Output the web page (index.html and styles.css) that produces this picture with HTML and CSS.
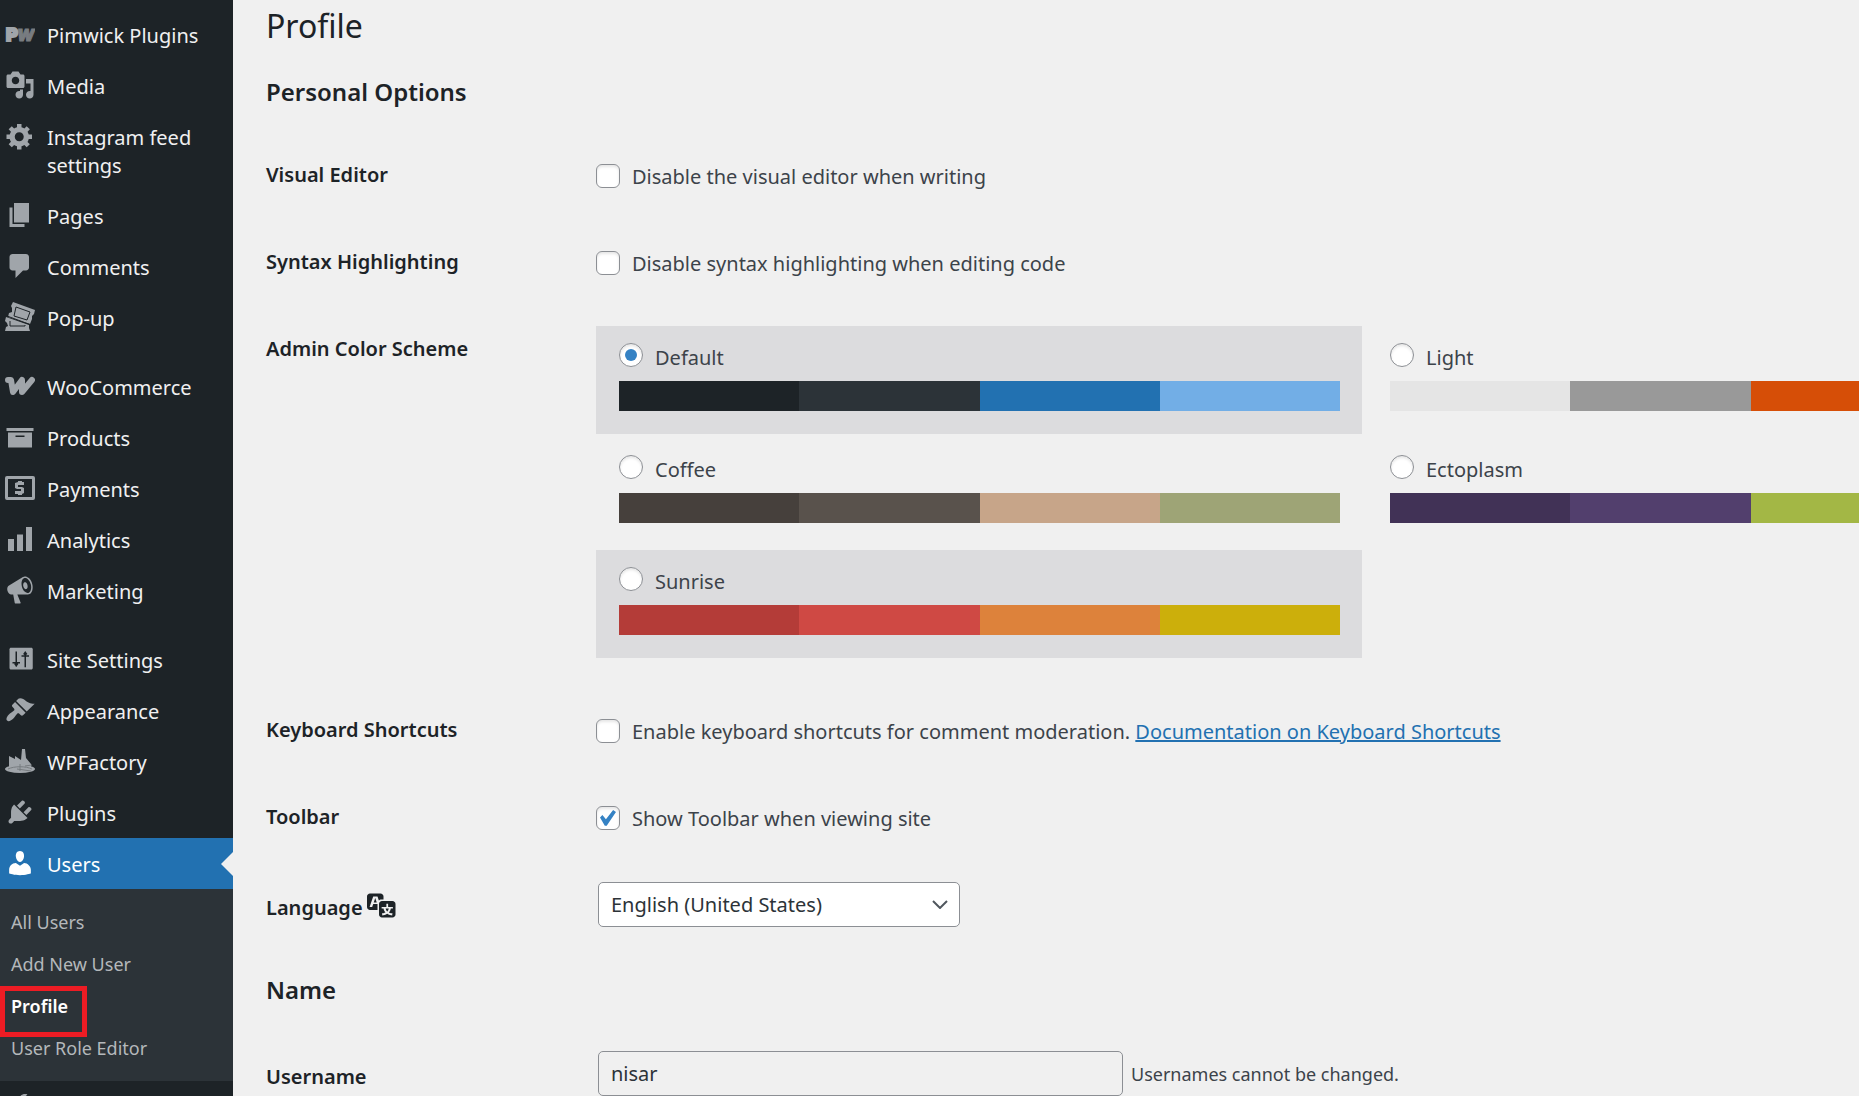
FILE: index.html
```html
<!DOCTYPE html>
<html lang="en">
<head>
<meta charset="utf-8">
<title>Profile</title>
<link rel="stylesheet" href="styles.css">
</head>
<body>
<div class="shell">
  <nav class="menu" aria-label="Main menu">
    <ul class="menu-group">
      <li><a class="item" href="#"><svg class="icon" viewBox="0 0 30 30"><text class="pw-w" x="12" y="22">W</text><text class="pw-p" x="1" y="22">P</text></svg><span>Pimwick Plugins</span></a></li>
      <li><a class="item" href="#"><svg class="icon" viewBox="0 0 20 20"><path d="M13 11V4c0-.55-.45-1-1-1h-1.67L9 1H5L3.67 3H2c-.55 0-1 .45-1 1v7c0 .55.45 1 1 1h10c.55 0 1-.45 1-1zM7 4.5c1.38 0 2.5 1.12 2.5 2.5S8.38 9.5 7 9.5 4.5 8.38 4.5 7 5.62 4.5 7 4.5zM14 6h5v10.5c0 1.38-1.12 2.5-2.5 2.5S14 17.88 14 16.5s1.12-2.5 2.5-2.5c.17 0 .34.02.5.05V9h-3V6zm-4 8.05V13h2v3.5c0 1.38-1.12 2.5-2.5 2.5S7 17.88 7 16.5 8.12 14 9.5 14c.17 0 .34.02.5.05z"/></svg><span>Media</span></a></li>
      <li><a class="item" href="#"><svg class="icon" viewBox="0 0 20 20"><path d="M18 12h-2.18c-.17.7-.44 1.35-.81 1.93l1.54 1.54-2.1 2.1-1.54-1.54c-.58.36-1.23.63-1.91.79V19H8v-2.18c-.68-.16-1.33-.43-1.91-.79l-1.54 1.54-2.12-2.12 1.54-1.54c-.36-.58-.63-1.23-.79-1.91H1V9.03h2.17c.16-.7.44-1.35.8-1.94L2.43 5.55l2.1-2.1 1.54 1.54c.58-.37 1.24-.64 1.93-.81V2h3v2.18c.68.16 1.33.43 1.91.79l1.54-1.54 2.12 2.12-1.54 1.54c.36.59.64 1.24.8 1.94H18V12zm-8.5 1.5c1.66 0 3-1.34 3-3s-1.34-3-3-3-3 1.34-3 3 1.34 3 3 3z"/></svg><span>Instagram feed settings</span></a></li>
      <li><a class="item" href="#"><svg class="icon" viewBox="0 0 20 20"><path d="M6 15V2h10v13H6zm-1 1h8v2H3V5h2v11z"/></svg><span>Pages</span></a></li>
      <li><a class="item" href="#"><svg class="icon" viewBox="0 0 20 20"><path d="M5 2h9c1.1 0 2 .9 2 2v7c0 1.1-.9 2-2 2h-2l-5 5v-5H5c-1.1 0-2-.9-2-2V4c0-1.1.9-2 2-2z"/></svg><span>Comments</span></a></li>
      <li><a class="item" href="#"><svg class="icon" viewBox="0 0 30 30"><path d="M8 0l22 8-1 4-2 2 0 3-2 5L3 15l1-4 3-1V6l-1-2z"/><path d="M1 15l23 8v3l1 3H0l1-4 2-1-1-3-2-2z"/><path class="cut" d="M11 5l14 5-3 8-13-4zM5 19v5h15v-1M2 14l23 8.500"/></svg><span>Pop-up</span></a></li>
    </ul>
    <ul class="menu-group">
      <li><a class="item" href="#"><svg class="icon" viewBox="0 0 30 30"><path class="woo" d="M3 9h3l2 12L17 9v12L27 9"/></svg><span>WooCommerce</span></a></li>
      <li><a class="item" href="#"><svg class="icon" viewBox="0 0 20 20"><path d="M19 4v2H1V4h18zM2 7h16v10H2V7zm11 3V9H7v1h6z"/></svg><span>Products</span></a></li>
      <li><a class="item" href="#"><svg class="icon" viewBox="0 0 30 30"><path fill-rule="evenodd" d="M2 3h26a2 2 0 0 1 2 2v20a2 2 0 0 1-2 2H2a2 2 0 0 1-2-2V5a2 2 0 0 1 2-2zm1 3v18h24V6z"/><path d="M13 8h4v1h2v3h-6v2h4l2 1v5l-2 1v1h-4v-1h-3v-3h6v-2h-4l-2-1v-5l3-1z"/></svg><span>Payments</span></a></li>
      <li><a class="item" href="#"><svg class="icon" viewBox="0 0 20 20"><path d="M18 18V2h-4v16h4zm-6 0V7H8v11h4zm-6 0v-8H2v8h4z"/></svg><span>Analytics</span></a></li>
      <li><a class="item" href="#"><svg class="icon" viewBox="0 0 20 20"><path d="M18.150 5.940c.46 1.620.38 3.220-.02 4.480-.42 1.280-1.260 2.180-2.300 2.480-.16.060-.26.060-.4.060-.06.020-.12.020-.18.020-.06.020-.14.020-.22.020h-6.800l2.220 5.500c.02.140-.06.260-.14.340-.08.100-.24.160-.34.160H6.950c-.1 0-.26-.06-.34-.16-.08-.08-.16-.2-.14-.34l-1-5.500H4.250l-.02-.02c-.5.060-1.080-.18-1.540-.62s-.88-1.080-1.060-1.880c-.24-.8-.2-1.560-.02-2.200.18-.62.580-1.080 1.060-1.300l.02-.02 9-5.400c.1-.06.180-.1.240-.16.060-.04.140-.08.240-.12.160-.08.280-.12.500-.18 1.040-.3 2.240.1 3.220.98s1.840 2.240 2.260 3.860zm-2.580 5.980h-.02c.4-.1.740-.34 1.040-.7.580-.7.860-1.760.860-3.040 0-.64-.1-1.300-.28-1.980-.34-1.360-1.020-2.500-1.780-3.240s-1.680-1.100-2.460-.88c-.82.220-1.400.960-1.700 2-.32 1.040-.28 2.360.06 3.720.38 1.360 1 2.500 1.800 3.240.78.740 1.620 1.100 2.480.880zm-2.540-7.080c.22-.04.420-.02.620.04.380.160.760.480 1.020 1s.42 1.200.42 1.780c0 .3-.04.560-.12.800-.18.480-.44.840-.86.940-.34.100-.8-.06-1.140-.4s-.64-.86-.78-1.500c-.18-.62-.12-1.240.02-1.720s.48-.84.820-.94z"/></svg><span>Marketing</span></a></li>
    </ul>
    <ul class="menu-group">
      <li><a class="item" href="#"><svg class="icon" viewBox="0 0 20 20"><path d="M4 2.500h13.500c.6 0 1 .4 1 1V16c0 .6-.4 1-1 1H4c-.6 0-1-.4-1-1V3.500c0-.6.4-1 1-1z"/><path class="cut" d="M7.500 5v10M5 12.500h5M13.500 15.500v-10M11 8h5M6.500 13l1 1.500 1-1.500M12.500 7l1-1.500 1 1.500"/></svg><span>Site Settings</span></a></li>
      <li><a class="item" href="#"><svg class="icon" viewBox="0 0 20 20"><path d="M14.480 11.060L7.410 3.990l1.500-1.500c.5-.56 2.300-.47 3.510.32 1.210.8 1.430 1.280 2.910 2.100 1.180.64 2.450 1.260 4.450.85zm-.71.71L6.700 4.700 4.930 6.470c-.39.39-.39 1.020 0 1.410l1.060 1.060c.39.39.39 1.030 0 1.420-.6.6-1.430 1.110-2.210 1.690-.35.26-.7.53-1.010.84C1.430 14.230.4 16.080 1.400 17.070c.99 1 2.840-.03 4.180-1.360.31-.31.580-.66.850-1.020.57-.78 1.080-1.610 1.690-2.210.39-.39 1.020-.39 1.410 0l1.060 1.060c.39.39 1.020.39 1.410 0z"/></svg><span>Appearance</span></a></li>
      <li><a class="item" href="#"><svg class="icon" viewBox="0 0 30 30"><ellipse cx="15" cy="23" rx="15" ry="4"/><path d="M4 22V10l6 3v-3l6 4 1-11h3l1 9 5 6v5z"/><path class="cut faint" d="M3 23c6-3 18-3 24 0M15 18v7M20 20l7-1M12 23l14 2"/></svg><span>WPFactory</span></a></li>
      <li><a class="item" href="#"><svg class="icon" viewBox="0 0 20 20"><path d="M13.110 4.360L9.870 7.600 8 5.730l3.240-3.240c.35-.34 1.050-.2 1.560.32.52.51.660 1.210.310 1.550zm-8 1.770l.91-1.120 9.010 9.010-1.190.84c-.71.71-2.630 1.160-3.820 1.160H6.140L4.900 17.260c-.59.59-1.540.59-2.120 0-.59-.58-.59-1.530 0-2.120l1.240-1.240v-3.880c0-1.130.4-3.190 1.090-3.890zm7.260 3.970l3.240-3.240c.34-.35 1.040-.21 1.550.31.52.51.660 1.210.310 1.550l-3.240 3.250z"/></svg><span>Plugins</span></a></li>
      <li>
        <a class="item current" href="#"><svg class="icon" viewBox="0 0 20 20"><path d="M10 9.250c-2.270 0-2.730-3.440-2.730-3.440C7 4.020 7.820 2 9.970 2c2.160 0 2.980 2.020 2.710 3.810 0 0-.41 3.440-2.680 3.440zm0 2.570L12.720 10c2.390 0 4.520 2.330 4.520 4.530v2.490s-3.650 1.130-7.240 1.130c-3.650 0-7.240-1.130-7.240-1.130v-2.490c0-2.250 1.940-4.480 4.470-4.480z"/></svg><span>Users</span></a>
        <ul class="submenu">
          <li><a href="#">All Users</a></li>
          <li><a href="#">Add New User</a></li>
          <li class="marked"><a class="active" href="#" aria-current="page">Profile</a></li>
          <li><a href="#">User Role Editor</a></li>
        </ul>
      </li>
      <li><a class="item" href="#" aria-label="Tools"><svg class="icon" viewBox="0 0 20 20"><path d="M16.680 9.770c-1.340 1.340-3.300 1.670-4.950.99l-5.410 6.520c-.99.99-2.590.99-3.580 0s-.99-2.590 0-3.570l6.520-5.420c-.68-1.650-.35-3.610.99-4.950 1.280-1.280 3.120-1.620 4.720-1.060l-2.890 2.890 2.820 2.820 2.860-2.870c.53 1.580.18 3.390-1.080 4.650z"/></svg></a></li>
    </ul>
  </nav>

  <main class="content">
    <h1>Profile</h1>
    <form>
      <h2>Personal Options</h2>
      <div class="row">
        <div class="name">Visual Editor</div>
        <label class="field check"><input type="checkbox"><span>Disable the visual editor when writing</span></label>
      </div>
      <div class="row">
        <div class="name">Syntax Highlighting</div>
        <label class="field check"><input type="checkbox"><span>Disable syntax highlighting when editing code</span></label>
      </div>
      <div class="row">
        <div class="name" id="scheme">Admin Color Scheme</div>
        <div class="field schemes" role="radiogroup" aria-labelledby="scheme">
          <label class="scheme shaded"><span class="choice"><input type="radio" name="color" checked><span>Default</span></span><span class="palette default"><i></i><i></i><i></i><i></i></span></label>
          <label class="scheme"><span class="choice"><input type="radio" name="color"><span>Light</span></span><span class="palette light"><i></i><i></i><i></i><i></i></span></label>
          <label class="scheme"><span class="choice"><input type="radio" name="color"><span>Coffee</span></span><span class="palette coffee"><i></i><i></i><i></i><i></i></span></label>
          <label class="scheme"><span class="choice"><input type="radio" name="color"><span>Ectoplasm</span></span><span class="palette ectoplasm"><i></i><i></i><i></i><i></i></span></label>
          <label class="scheme shaded"><span class="choice"><input type="radio" name="color"><span>Sunrise</span></span><span class="palette sunrise"><i></i><i></i><i></i><i></i></span></label>
        </div>
      </div>
      <div class="row">
        <div class="name">Keyboard Shortcuts</div>
        <div class="field check"><input type="checkbox" id="keys"><span><label for="keys">Enable keyboard shortcuts for comment moderation.</label> <a href="#">Documentation on Keyboard Shortcuts</a></span></div>
      </div>
      <div class="row">
        <div class="name">Toolbar</div>
        <label class="field check"><input type="checkbox" checked><span>Show Toolbar when viewing site</span></label>
      </div>
      <div class="row boxed">
        <label class="name" for="language">Language <svg class="translate" viewBox="0 0 20 20"><path d="M11 7H9.490c-.63 0-1.250.3-1.590.7L7 5H4.130l-2.390 7h1.690l.74-2H7v4H2c-1.100 0-2-.9-2-2V5c0-1.100.9-2 2-2h7c1.100 0 2 .9 2 2v2zM6.510 9H4.490l1-2.930zM10 8h7c1.100 0 2 .9 2 2v7c0 1.100-.9 2-2 2h-7c-1.100 0-2-.9-2-2v-7c0-1.100.9-2 2-2zm7.250 5v-1.080h-3.170V9.750h-1.160v2.170H9.750V13h1.280c.11.850.56 1.850 1.280 2.620-.87.360-1.890.62-2.310.62-.01.020.22.970.2 1.460.84 0 2.210-.5 3.280-1.150 1.090.65 2.480 1.150 3.340 1.150-.02-.49.2-1.440.2-1.460-.43 0-1.490-.27-2.380-.63.7-.77 1.140-1.770 1.250-2.610h1.360zm-3.810 1.930c-.5-.46-.85-1.130-1.010-1.930h2.090c-.17.8-.51 1.470-1 1.930l-.04.03s-.03-.02-.04-.03z"/></svg></label>
        <div class="field"><span class="select"><select id="language"><option>English (United States)</option></select><svg viewBox="0 0 16 9"><path d="M1 1l7 7 7-7"/></svg></span></div>
      </div>
      <h2>Name</h2>
      <div class="row boxed">
        <label class="name" for="username">Username</label>
        <div class="field"><input type="text" id="username" value="nisar" readonly><span class="hint">Usernames cannot be changed.</span></div>
      </div>
    </form>
  </main>
</div>
</body>
</html>
```
FILE: styles.css
```css
*, *::before, *::after { box-sizing: border-box; }

body {
  margin: 0;
  background: #f0f0f0;
  color: #3c434a;
  font: 20px/28px "Noto Sans", "Segoe UI", sans-serif;
}

ul { list-style: none; margin: 0; padding: 0; }

.shell {
  display: grid;
  grid-template-columns: 233px minmax(0, 1fr);
  height: 100vh;
  overflow: hidden;
}

/* Admin menu */
.menu { background: #1d2327; padding-top: 9px; }
.menu-group + .menu-group { margin-top: 18px; }

.item {
  position: relative;
  display: flex;
  align-items: flex-start;
  gap: 12px;
  min-height: 51px;
  padding: 13px 16px 10px 5px;
  color: #f0f0f1;
  text-decoration: none;
}

.icon { flex: none; width: 30px; height: 30px; margin-top: -3px; fill: #a0a5aa; }
.icon .cut { fill: none; stroke: #1d2327; stroke-width: 1; }
.icon .faint { stroke: #777c80; }
.icon .woo { fill: none; stroke: #a0a5aa; stroke-width: 6; stroke-linecap: round; stroke-linejoin: round; }
.pw-p, .pw-w { font: 900 18px Inter, sans-serif; }
.pw-p { stroke: #a0a5aa; stroke-width: 2; }
.pw-w { fill: #787c80; stroke: #787c80; stroke-width: 1; font-size: 16px; font-style: italic; }

.current { background: #2271b1; color: #fff; }
.current .icon { fill: #fff; }
.current::after {
  content: "";
  position: absolute;
  right: 0;
  top: 14px;
  border: 12px solid transparent;
  border-left-width: 0;
  border-right-color: #f0f0f0;
}

.submenu { background: #2c3338; padding: 12px 0; }
.submenu a {
  display: block;
  padding-left: 11px;
  color: #b4b8bb;
  font-size: 18px;
  line-height: 42px;
  text-decoration: none;
}
.submenu .active { color: #fff; font-weight: 600; }
.marked { position: relative; }
.marked::after {
  content: "";
  position: absolute;
  left: 0;
  top: 1px;
  width: 87px;
  height: 51px;
  border: 5px solid #ed1c24;
  pointer-events: none;
}

/* Profile form */
.content { padding-left: 33px; }
h1, h2 { margin: 0; color: #1d2327; }
h1 { padding: 4px 0; font-size: 32px; font-weight: 400; line-height: 44px; }
h2 { padding: 24px 0 23px; font-size: 24px; font-weight: 600; line-height: 32px; }

.row { display: grid; grid-template-columns: 330px minmax(0, 1fr); }
.name { padding: 30px 10px 30px 0; color: #1d2327; font-weight: 600; line-height: 27px; }
.boxed .name { display: flex; gap: 4px; padding: 34px 10px 29px 0; }
.translate { width: 30px; height: 30px; margin-top: -5px; fill: #1d2327; }
.field { padding-top: 21px; }
.check { display: flex; align-items: flex-start; gap: 12px; padding-top: 32px; }
a { color: #2271b1; }

input[type="checkbox"], input[type="radio"] {
  appearance: none;
  flex: none;
  display: grid;
  place-items: center;
  width: 24px;
  height: 24px;
  margin: 1px 0 0;
  border: 1px solid #8c8f94;
  border-radius: 6px;
  background: #fff;
  box-shadow: inset 0 2px 3px rgba(0, 0, 0, .1);
}
input[type="radio"] { border-radius: 50%; margin: 0; }
input[type="radio"]:checked::before {
  content: "";
  width: 12px;
  height: 12px;
  border-radius: 50%;
  background: #3582c4;
}
input[type="checkbox"]:checked::before {
  content: "";
  width: 16px;
  height: 16px;
  background: #3582c4;
  clip-path: polygon(0 47%, 15% 32%, 37% 58%, 82% 0, 100% 12%, 42% 98%, 30% 98%);
}

.schemes {
  display: grid;
  grid-template-columns: repeat(2, minmax(766px, 1fr));
  gap: 4px 5px;
  padding-bottom: 28px;
}
.scheme { padding: 17px 22px 23px 23px; }
.shaded { background: #dcdcde; }
.choice { display: flex; gap: 12px; height: 38px; line-height: 30px; }
.palette { display: grid; grid-template-columns: repeat(4, 1fr); height: 30px; }
.default i:nth-child(1) { background: #1d2327; }
.default i:nth-child(2) { background: #2c3338; }
.default i:nth-child(3) { background: #2271b1; }
.default i:nth-child(4) { background: #72aee6; }
.light i:nth-child(1) { background: #e5e5e5; }
.light i:nth-child(2) { background: #999; }
.light i:nth-child(3) { background: #d64e07; }
.light i:nth-child(4) { background: #04a4cc; }
.coffee i:nth-child(1) { background: #46403c; }
.coffee i:nth-child(2) { background: #59524c; }
.coffee i:nth-child(3) { background: #c7a589; }
.coffee i:nth-child(4) { background: #9ea476; }
.ectoplasm i:nth-child(1) { background: #413256; }
.ectoplasm i:nth-child(2) { background: #523f6d; }
.ectoplasm i:nth-child(3) { background: #a3b745; }
.ectoplasm i:nth-child(4) { background: #d46f15; }
.sunrise i:nth-child(1) { background: #b43c38; }
.sunrise i:nth-child(2) { background: #cf4944; }
.sunrise i:nth-child(3) { background: #dd823b; }
.sunrise i:nth-child(4) { background: #ccaf0b; }

.boxed .field { display: flex; align-items: center; align-self: start; gap: 8px; padding: 22px 0 0 2px; }
.select { display: grid; align-items: center; }
.select > * { grid-area: 1 / 1; }
.select svg { justify-self: end; width: 16px; height: 9px; margin-right: 12px; fill: none; stroke: #50575e; stroke-width: 2; pointer-events: none; }
select, input[type="text"] {
  appearance: none;
  height: 45px;
  margin: 0;
  padding: 0 12px;
  border: 1px solid #8c8f94;
  border-radius: 5px;
  background: #fff;
  color: #2c3338;
  font: inherit;
}
select { width: 362px; }
input[type="text"] { width: 525px; background: #f0f0f0; }
.hint { font-size: 18px; }
```
